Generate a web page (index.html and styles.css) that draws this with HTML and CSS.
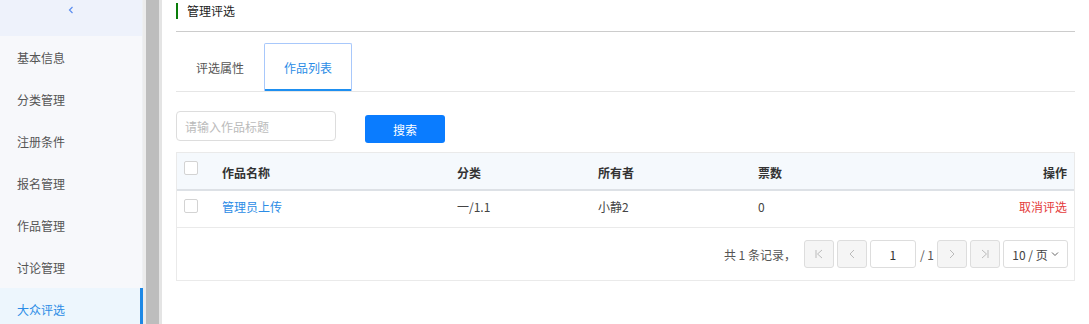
FILE: index.html
```html
<!DOCTYPE html>
<html lang="zh-CN">
<head>
  <meta charset="UTF-8" />
  <meta name="viewport" content="width=device-width, initial-scale=1" />
  <title>管理评选</title>
  <link rel="stylesheet" href="styles.css">
</head>
<body>

  <aside class="sidebar">
    <div class="collapse">
      <svg width="6" height="8" viewBox="0 0 6 8"><path d="M4.5 1 L1.5 4 L4.5 7" fill="none" stroke="#5b8def" stroke-width="1.2"/></svg>
    </div>
    <nav class="menu">
      <a href="#">基本信息</a>
      <a href="#">分类管理</a>
      <a href="#">注册条件</a>
      <a href="#">报名管理</a>
      <a href="#">作品管理</a>
      <a href="#">讨论管理</a>
      <a href="#" class="active">大众评选</a>
    </nav>
  </aside>

  <div class="gutter"></div>

  <main class="content">
    <div class="page-title"><span>管理评选</span></div>

    <div class="tabs">
      <a href="#" class="tab">评选属性</a>
      <a href="#" class="tab active">作品列表</a>
    </div>

    <div class="search">
      <input type="text" placeholder="请输入作品标题" />
      <button class="btn-search">搜索</button>
    </div>

    <div class="grid-table">
      <div class="row head">
        <div class="cell check"><span class="box"></span></div>
        <div class="cell">作品名称</div>
        <div class="cell">分类</div>
        <div class="cell">所有者</div>
        <div class="cell">票数</div>
        <div class="cell op">操作</div>
      </div>
      <div class="row">
        <div class="cell check"><span class="box"></span></div>
        <div class="cell"><a href="#" class="link">管理员上传</a></div>
        <div class="cell">一/1.1</div>
        <div class="cell">小静2</div>
        <div class="cell">0</div>
        <div class="cell op"><a href="#" class="danger">取消评选</a></div>
      </div>

      <div class="pager">
        <span class="total">共 1 条记录，</span>
        <button class="pg">
          <svg width="10" height="10" viewBox="0 0 10 10"><path d="M2 1 V9 M8 1 L3.5 5 L8 9" fill="none" stroke="#bbb" stroke-width="1"/></svg>
        </button>
        <button class="pg">
          <svg width="10" height="10" viewBox="0 0 10 10"><path d="M7 1 L3 5 L7 9" fill="none" stroke="#bbb" stroke-width="1"/></svg>
        </button>
        <input class="pg-input" type="text" value="1" />
        <span class="pg-count">/ 1</span>
        <button class="pg">
          <svg width="10" height="10" viewBox="0 0 10 10"><path d="M3 1 L7 5 L3 9" fill="none" stroke="#bbb" stroke-width="1"/></svg>
        </button>
        <button class="pg">
          <svg width="10" height="10" viewBox="0 0 10 10"><path d="M8 1 V9 M2 1 L6.5 5 L2 9" fill="none" stroke="#bbb" stroke-width="1"/></svg>
        </button>
        <div class="pg-size">
          10 / 页
          <svg width="8" height="6" viewBox="0 0 8 6"><path d="M1 1.5 L4 4.5 L7 1.5" fill="none" stroke="#666" stroke-width="1"/></svg>
        </div>
      </div>
    </div>
  </main>

</body>
</html>
```

FILE: styles.css
```css
* {
  box-sizing: border-box;
}
body {
  margin: 0;
  font-family: "Noto Sans CJK SC", "Liberation Sans", sans-serif;
  font-size: 12px;
  color: #333;
  background: #fff;
  display: flex;
  height: 100vh;
  overflow: hidden;
}
a {
  text-decoration: none;
}

/* 侧边栏 */
.sidebar {
  width: 143px;
  flex-shrink: 0;
  background: #f7f8fb;
  border-right: 1px solid #eef0f3;
}
.collapse {
  height: 36px;
  background: #eef2fb;
  display: flex;
  justify-content: center;
  padding-top: 6px;
}
.menu a {
  display: flex;
  align-items: center;
  height: 42px;
  padding-left: 17px;
  color: #555;
  font-size: 12px;
}
.menu a.active {
  background: #edf6fd;
  color: #2b8ce6;
  border-right: 3px solid #1e88e5;
  margin-right: -1px;
}
.gutter {
  width: 19px;
  flex-shrink: 0;
  background: #bdbdbd;
  border-left: 3px solid #ececec;
  border-right: 3px solid #e4e4e4;
}

/* 内容 */
.content {
  flex: 1;
  padding: 3px 14px 0 14px;
}
.page-title {
  border-bottom: 1px solid #ccc;
  padding-bottom: 12px;
}
.page-title span {
  display: block;
  border-left: 2px solid #0a7d0a;
  padding-left: 9px;
  line-height: 16px;
  color: #222;
}
.tabs {
  display: flex;
  margin-top: 11px;
  border-bottom: 1px solid #e6e6e6;
}
.tab {
  height: 48px;
  padding: 0 19px;
  display: flex;
  align-items: center;
  color: #555;
  font-size: 12px;
  border: 1px solid transparent;
  border-bottom: none;
}
.tab.active {
  color: #2b8ce6;
  border-color: #a8c8fb;
  border-radius: 2px 2px 0 0;
  box-shadow: inset 0 -2px 0 #1e8ff0;
}

.search {
  display: flex;
  align-items: flex-start;
  margin-top: 19px;
  gap: 29px;
}
.search input {
  width: 160px;
  height: 30px;
  border: 1px solid #ddd;
  border-radius: 4px;
  padding: 0 8px;
  font-family: inherit;
  font-size: 12px;
  outline: none;
}
.search input::placeholder {
  color: #bbb;
}
.btn-search {
  margin-top: 4px;
  width: 80px;
  height: 28px;
  border: none;
  border-radius: 3px;
  background: #0a7cff;
  color: #fff;
  font-family: inherit;
  font-size: 12px;
  cursor: pointer;
}

/* 表格 */
.grid-table {
  margin-top: 9px;
  border: 1px solid #eaeaea;
}
.row {
  display: grid;
  grid-template-columns: 45px 235px 141px 160px 1fr 120px;
  height: 37px;
  border-bottom: 1px solid #eaeaea;
  color: #444;
}
.row.head {
  height: 38px;
  background: #f5f9fd;
  border-bottom: 2px solid #dde1e6;
  font-weight: bold;
  color: #333;
}
.cell {
  padding-top: 8px;
  line-height: 16px;
}
.row.head .cell {
  padding-top: 12px;
}
.row.head .cell.check {
  padding-top: 8px;
}
.cell.check {
  padding-left: 7px;
}
.cell.op {
  text-align: right;
  padding-right: 7px;
}
.box {
  display: block;
  width: 14px;
  height: 14px;
  border: 1px solid #d3d3d3;
  border-radius: 2px;
  background: #fff;
}
.link {
  color: #2b8ce6;
}
.danger {
  color: #e43a3a;
}

.pager {
  display: flex;
  justify-content: flex-end;
  align-items: center;
  gap: 3px;
  padding: 12px 6px 12px 0;
  color: #555;
}
.total {
  margin-right: 5px;
}
.pg {
  width: 30px;
  height: 28px;
  border: 1px solid #ddd;
  border-radius: 3px;
  background: #f5f5f5;
  display: flex;
  align-items: center;
  justify-content: center;
  padding: 0;
}
.pg-input {
  width: 46px;
  height: 28px;
  border: 1px solid #ddd;
  border-radius: 3px;
  text-align: center;
  font-family: inherit;
  font-size: 12px;
  color: #333;
  outline: none;
}
.pg-count {
  margin-left: 1px;
}
.pg-size {
  width: 65px;
  height: 28px;
  border: 1px solid #ddd;
  border-radius: 3px;
  display: flex;
  align-items: center;
  justify-content: center;
  gap: 3px;
  color: #444;
}
```
